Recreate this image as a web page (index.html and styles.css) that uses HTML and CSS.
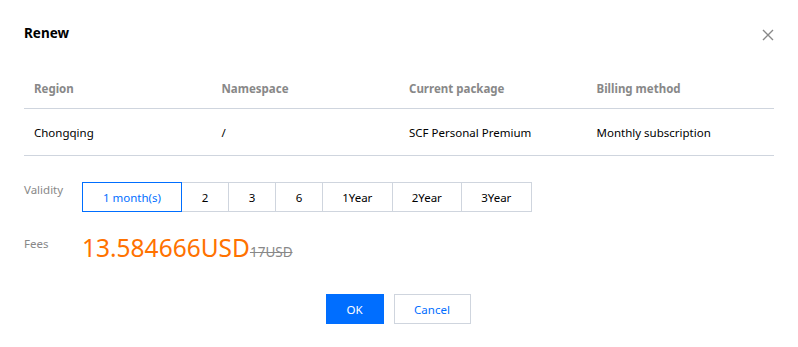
FILE: index.html
```html
<!DOCTYPE html>
<html lang="en">
<head>
    <meta charset="UTF-8">
    <title>Renew</title>
    <link rel="stylesheet" href="styles.css">
</head>
<body>
    <div class="dialog">
        <div class="dialog-header">
            <h3 class="dialog-title">Renew</h3>
            <button class="close-btn" aria-label="Close">
                <svg width="12" height="12" viewBox="0 0 12 12">
                    <path d="M1 1L11 11M11 1L1 11" stroke="#888" stroke-width="1.4" fill="none"/>
                </svg>
            </button>
        </div>

        <table class="info-table">
            <thead>
                <tr>
                    <th>Region</th>
                    <th>Namespace</th>
                    <th>Current package</th>
                    <th>Billing method</th>
                </tr>
            </thead>
            <tbody>
                <tr>
                    <td>Chongqing</td>
                    <td>/</td>
                    <td>SCF Personal Premium</td>
                    <td>Monthly subscription</td>
                </tr>
            </tbody>
        </table>

        <div class="form-row">
            <label class="form-label">Validity</label>
            <div class="segment">
                <button class="seg-item seg-wide active">1 month(s)</button>
                <button class="seg-item">2</button>
                <button class="seg-item">3</button>
                <button class="seg-item">6</button>
                <button class="seg-item seg-year">1Year</button>
                <button class="seg-item seg-year">2Year</button>
                <button class="seg-item seg-year">3Year</button>
            </div>
        </div>

        <div class="form-row fees-row">
            <label class="form-label">Fees</label>
            <div class="price">
                <span class="price-now">13.584666USD</span><span class="price-old">17USD</span>
            </div>
        </div>

        <div class="dialog-footer">
            <button class="btn btn-primary">OK</button>
            <button class="btn btn-default">Cancel</button>
        </div>
    </div>
</body>
</html>
```

FILE: styles.css
```css
body {
    margin: 0;
    background: #fff;
    font-family: "Noto Sans", "Open Sans", Arial, sans-serif;
    font-size: 11.5px;
    color: #000;
}
.dialog {
    width: 750px;
    padding: 21px 24px 0;
}
.dialog-header {
    display: flex;
    justify-content: space-between;
    align-items: center;
    height: 24px;
}
.dialog-title {
    margin: 0;
    font-size: 13.5px;
    font-weight: 700;
}
.close-btn {
    border: none;
    background: none;
    padding: 0;
    width: 12px;
    height: 12px;
    display: flex;
    margin-top: 4px;
    cursor: pointer;
}
.info-table {
    width: 100%;
    margin-top: 24px;
    border-collapse: collapse;
    table-layout: fixed;
}
.info-table th,
.info-table td {
    text-align: left;
    padding: 0 10px;
    border-bottom: 1px solid #cfd5de;
}
.info-table th {
    height: 38px;
    color: #888;
    font-weight: 700;
    padding-bottom: 1px;
}
.info-table td {
    height: 46px;
}
.form-row {
    display: flex;
    margin-top: 26px;
}
.form-label {
    width: 58px;
    color: #888;
    line-height: 20px;
    margin-top: -2px;
}
.segment {
    display: flex;
}
.seg-item {
    height: 30px;
    width: 48px;
    margin-left: -1px;
    border: 1px solid #cfd5de;
    background: #fff;
    color: #000;
    font-family: inherit;
    font-size: 11.5px;
    padding: 0;
    cursor: pointer;
}
.seg-item:first-child {
    margin-left: 0;
}
.seg-wide {
    width: 100px;
}
.seg-year {
    width: 70.5px;
}
.seg-item.active {
    border-color: #006eff;
    color: #006eff;
    position: relative;
    z-index: 1;
}
.fees-row {
    margin-top: 20px;
}
.fees-row .form-label {
    margin-top: 2px;
}
.price-now {
    color: #ff7200;
    font-size: 24.5px;
    line-height: 32px;
}
.price-old {
    color: #888;
    font-size: 13.5px;
    text-decoration: line-through;
}
.dialog-footer {
    display: flex;
    justify-content: center;
    gap: 10px;
    margin-top: 30px;
    padding-right: 2px;
}
.btn {
    height: 30px;
    padding: 0;
    font-family: inherit;
    font-size: 11.5px;
    cursor: pointer;
    border: 1px solid;
}
.btn-primary {
    width: 58px;
    background: #006eff;
    border-color: #006eff;
    color: #fff;
}
.btn-default {
    width: 77px;
    background: #fff;
    border-color: #cfd5de;
    color: #006eff;
}
```
